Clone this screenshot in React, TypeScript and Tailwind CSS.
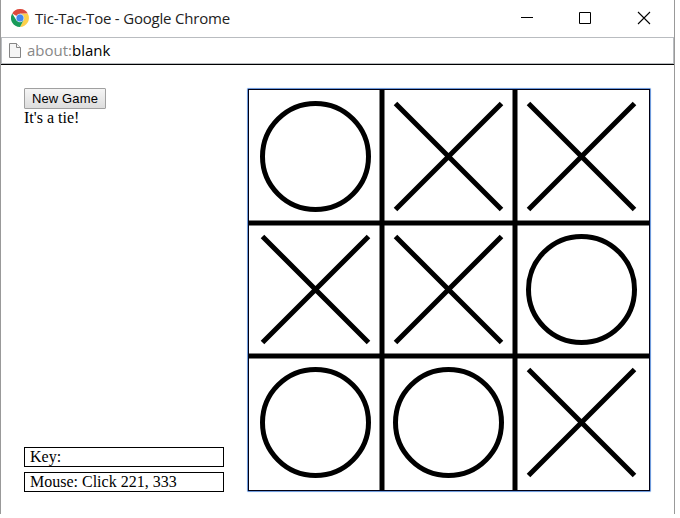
type Mark = 'X' | 'O';

const board: Mark[] = ['O', 'X', 'X', 'X', 'X', 'O', 'O', 'O', 'X'];
const CELL = 133;

function ChromeLogo() {
  return (
    <svg className="ml-[10px] size-[18px] shrink-0" viewBox="0 0 18 18">
      <path d="M9 9 1.2 4.5A9 9 0 0 1 16.8 4.5L9 4.8Z" fill="#dc4a3d" />
      <path d="M9 4.8H16.9A9 9 0 0 1 9 18L12.7 11Z" fill="#fcd04b" />
      <path d="M1.2 4.5A9 9 0 0 0 9 18L12.7 11 9 13 5.3 11Z" fill="#199b5a" />
      <circle cx="9" cy="9" r="4.3" fill="#dbe6f5" />
      <circle cx="9" cy="9" r="3.5" fill="#4387ee" />
    </svg>
  );
}

function TitleBar() {
  return (
    <header className="flex h-[36px] shrink-0 items-center pb-[2px]">
      <ChromeLogo />
      <span className="ml-[6px] whitespace-nowrap font-['Open_Sans',sans-serif] text-[15px] leading-5 tracking-[-0.2px] text-[#222]">
        Tic-Tac-Toe - Google Chrome
      </span>
      <div className="ml-auto mr-[23px] flex gap-[45px]">
        <svg className="size-[14px]" viewBox="0 0 14 14" fill="none" stroke="#000">
          <path d="M2 6.5h12" />
        </svg>
        <svg className="size-[14px]" viewBox="0 0 14 14" fill="none" stroke="#000">
          <path d="M1.5 1.5h11v11h-11z" />
        </svg>
        <svg className="size-[14px]" viewBox="0 0 14 14" fill="none" stroke="#000" strokeWidth="1.1">
          <path d="m1 1 12 12M13 1 1 13" />
        </svg>
      </div>
    </header>
  );
}

function AddressBar() {
  return (
    <div className="flex h-[28px] shrink-0 items-center border-b border-black">
      <div className="flex h-[27px] w-full items-center border border-[#b9bcc0]">
        <svg className="ml-[7px] h-[15px] w-[12px]" viewBox="0 0 12 15" fill="#f5f5f5" stroke="#858585">
          <path d="M.5.5h7l4 4v10H.5z" />
          <path d="M7.5.5v4h4" />
        </svg>
        <span className="ml-[6px] pb-px font-['Open_Sans',sans-serif] text-[15px] leading-5 text-[#888]">
          about:<span className="text-black">blank</span>
        </span>
      </div>
    </div>
  );
}

function Board() {
  return (
    <div className="size-[404px] rounded-[1px] border border-[#6f9bdc] shadow-[0_0_1px_#8fb3e8]">
      <svg className="size-[402px] border border-[#000014]" viewBox="0 0 400 400" fill="none" stroke="#000" strokeWidth="5">
        <path d="M133 0v400M266 0v400M0 133h400M0 266h400" />
        {board.map((mark, i) => {
          const cx = (i % 3) * CELL + CELL / 2;
          const cy = Math.floor(i / 3) * CELL + CELL / 2;
          return mark === 'O' ? (
            <circle key={i} cx={cx} cy={cy} r="53" />
          ) : (
            <path key={i} d={`M${cx - 53} ${cy - 53}l106 106M${cx + 53} ${cy - 53}l-106 106`} />
          );
        })}
      </svg>
    </div>
  );
}

export default function App() {
  return (
    <div className="h-[518px] w-[680px] bg-white">
      <div className="flex h-[514px] w-[675px] flex-col border-x border-[#999] bg-white pt-px">
        <TitleBar />
        <AddressBar />
        <main className="flex pl-[23px] pt-[23px] font-['Liberation_Serif',serif] text-[16px] text-black">
          <div className="flex h-[404px] w-[200px] flex-col">
            <button className="h-[21px] w-[82px] rounded-[1px] border border-[#a0a0a0] bg-linear-to-b from-[#f5f5f5] to-[#dddddd] font-['Liberation_Sans',sans-serif] text-[13px] leading-[19px] tracking-[0.15px] whitespace-nowrap">
              New Game
            </button>
            <p className="leading-[18px]">It's a tie!</p>
            <div className="mt-auto flex flex-col gap-[5px]">
              <div className="h-[20px] border border-black pl-[5px] leading-[18px]">Key:</div>
              <div className="h-[20px] border border-black pl-[5px] leading-[18px]">Mouse: Click 221, 333</div>
            </div>
          </div>
          <div className="ml-[23px]">
            <Board />
          </div>
        </main>
      </div>
    </div>
  );
}
